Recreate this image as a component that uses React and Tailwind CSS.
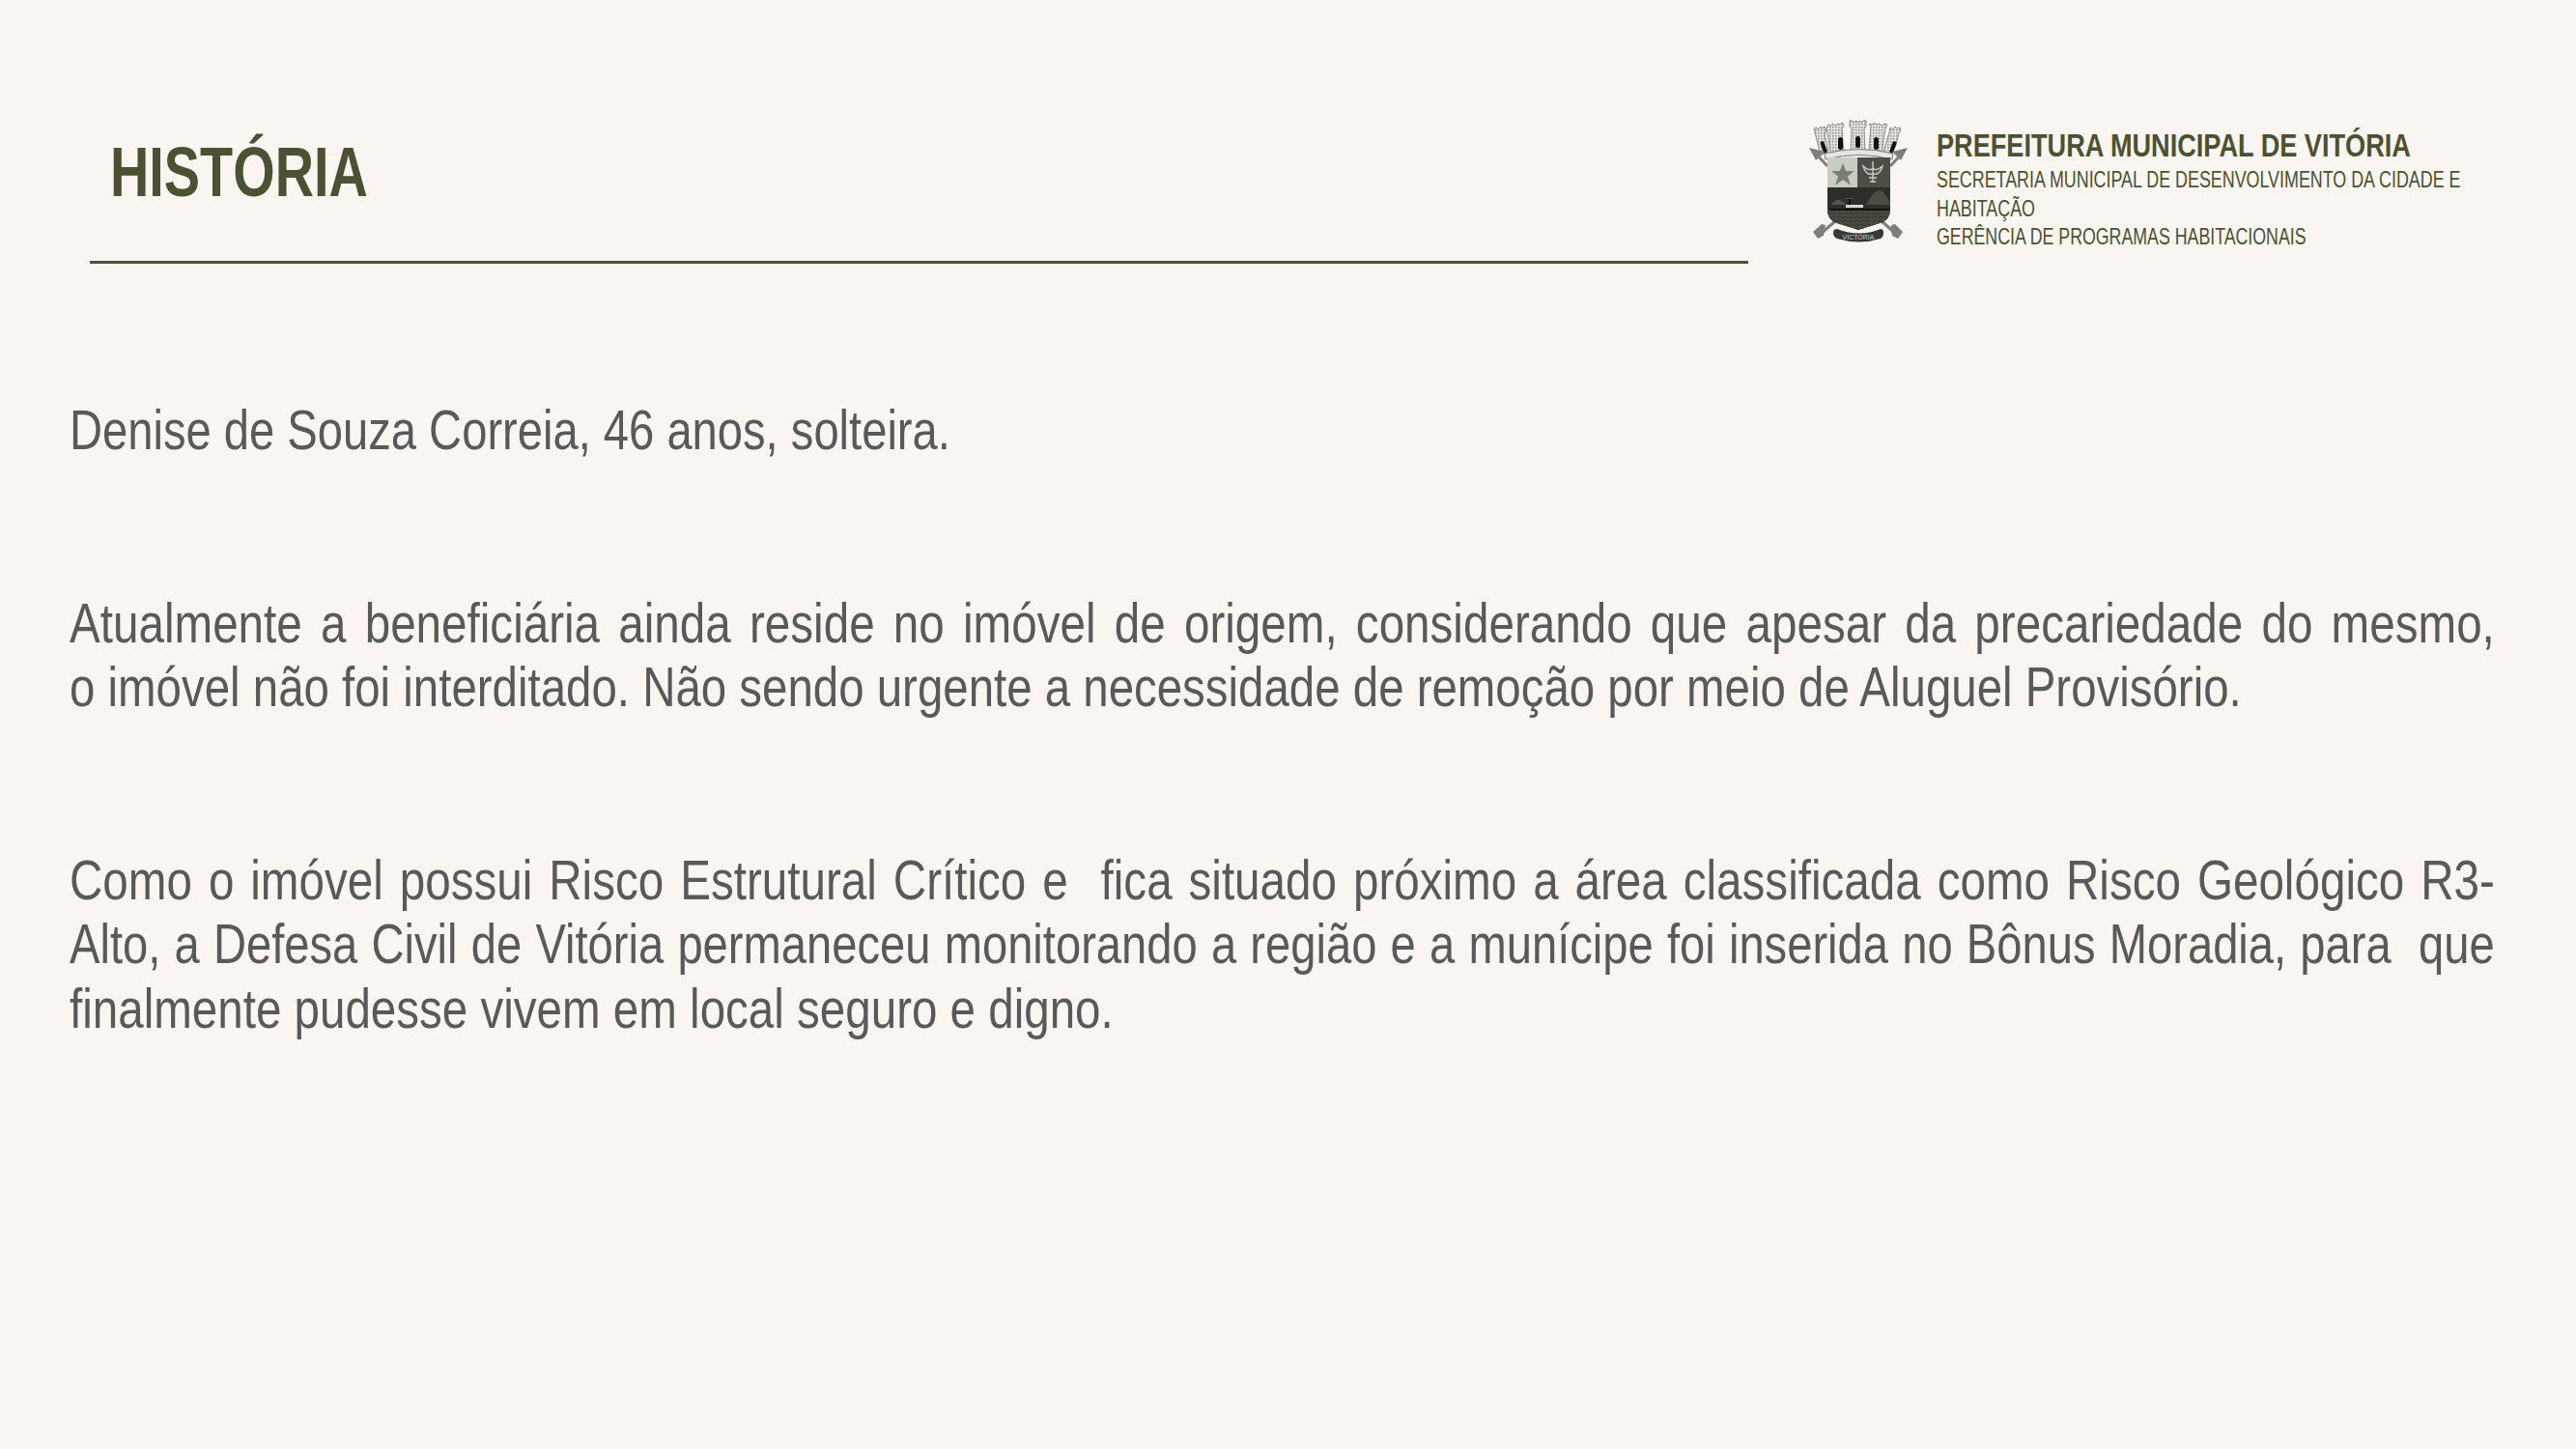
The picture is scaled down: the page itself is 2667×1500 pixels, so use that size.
const F = { fontFamily: '"Liberation Sans",Arial,sans-serif' };

function Crest() {
  return (
    <svg width="104" height="134" viewBox="0 0 104 134" className="shrink-0">
      <defs>
        <pattern id="st" width="3" height="3" patternUnits="userSpaceOnUse">
          <rect width="3" height="3" fill="#e4e2dc" />
          <rect width="1.500" height="1.500" fill="#8f8e88" />
        </pattern>
        <pattern id="sea" width="6" height="4" patternUnits="userSpaceOnUse">
          <rect width="6" height="4" fill="#4b4c42" />
          <path d="M0 3q1.500-3 3 0t3 0" stroke="#2a2b26" strokeWidth="1" fill="none" />
        </pattern>
      </defs>
      <g fill="url(#st)" stroke="#77776f" strokeWidth="0.800">
        <path d="M5 11l3-1 1 2 3-3 1 2 3-2 2 4-2 4 4 17-8 5-4-16-3-12z" />
        <path d="M20 7l3 1 2-2 2 2 3-2 2 1 3-2 1 4-2 2 2 26-13 4-4-26-2-2z" />
        <path d="M42 3h3l1 2 3-2 1 2 3-2 1 2 2-2h3v6l-2 2 1 26H43l1-26-2-2z" />
        <path d="M63 6l2 1 3-2 2 2 3-1 2 2 3-2 3 1-2 4-4 26-13-4 2-25-2-1z" />
        <path d="M84 10l3 2 2-3 2 2 3-1 1 3-2 3-3 12-5 11-8-4 6-20z" />
      </g>
      <g fill="#121210">
        <rect x="13" y="24" width="4" height="13" rx="2" transform="rotate(-20 15 30)" />
        <rect x="30" y="20" width="5" height="13" rx="2.500" />
        <rect x="48" y="19" width="5" height="12" rx="2.500" />
        <rect x="67" y="20" width="5" height="13" rx="2.500" />
        <rect x="85" y="24" width="4" height="13" rx="2" transform="rotate(20 87 30)" />
      </g>
      <path d="M16 37Q52 28 87 37l-1 6Q52 34 17 43z" fill="#e6e5df" stroke="#77776f" strokeWidth="1" />
      <g stroke="#7d8078" strokeWidth="3">
        <path d="M19 50L6 36" />
        <path d="M84 50l13-14" />
        <path d="M27 107L12 120" />
        <path d="M75 107l15 13" />
      </g>
      <g fill="#7d8078">
        <path d="M0 31l16 4-9 9z" />
        <path d="M102 31l-16 4 9 9z" />
        <path d="M17 111l-4-1-9 8 5 7 6-3 1-5z" />
        <path d="M85 111l4-1 8 8-5 7-6-3-1-5z" />
      </g>
      <path d="M19 41h31v31H19z" fill="#c8cdc1" />
      <path d="M50 41h34v31H50z" fill="#4d4f46" />
      <path d="M19 72h65v23q0 12-14 15l-19 6-19-6q-13-3-13-15z" fill="#2e2f2a" />
      <path d="M19 95h65q0 12-14 15l-19 6-19-6q-13-3-13-15z" fill="url(#sea)" />
      <path d="M35 47l3.200 8h8.800l-7 5.500 2.800 9-7.800-5.500-7.800 5.500 2.800-9-7-5.500h8.800z" fill="#7b7f72" />
      <path d="M66 45v22M56 50q7 6 10 2q3 4 10-2q-3 10-10 8q-7 2-10-8zM62 62h8M63 66h6" stroke="#c9cbc2" strokeWidth="1.400" fill="none" />
      <path d="M59 90q7-14 13-15t12 13v2z" fill="#4b4c42" />
      <path d="M23 90q3-5 7-5t9 5z" fill="#55564d" />
      <rect x="38" y="90" width="18" height="3" fill="#d8d8d0" />
      <rect x="41" y="83" width="2" height="7" fill="#111" />
      <rect x="37" y="83" width="9" height="1" fill="#555" />
      <path d="M21 95h62" stroke="#111" strokeWidth="2" />
      <path d="M29 115q23 9 45 0 3 0 3 4t-3 6q-22 7-45 0-4-2-4-6t4-4z" fill="#383933" />
      <text x="51" y="126" textAnchor="middle" fontSize="7" fill="#ccc" fontFamily="Liberation Sans">VICTORIA</text>
    </svg>
  );
}

export default function App() {
  return (
    <div className="w-[2667px] h-[1500px] bg-[#faf5f1] overflow-hidden" style={F}>
      <header className="flex items-start pl-[93px] pt-[122px]">
        <div className="w-[1717px] shrink-0 border-b-[3px] border-[#4b5132] h-[151px] pl-[21px] pt-[14px]">
          <h1 className="m-0 text-[73px] leading-[84px] font-bold text-[#4b5132] origin-left scale-x-[0.765]">HISTÓRIA</h1>
        </div>
        <div className="flex items-start ml-[63px] gap-[28px]">
          <Crest />
          <div className="w-[580px] pt-[8px] text-[#4b5132]">
            <div className="text-[34px] leading-[41px] font-bold whitespace-nowrap origin-left scale-x-[0.798]">PREFEITURA MUNICIPAL DE VITÓRIA</div>
            <div className="w-[780px] text-[24px] leading-[29.5px] origin-left scale-x-[0.745]">SECRETARIA MUNICIPAL DE DESENVOLVIMENTO DA CIDADE E HABITAÇÃO</div>
            <div className="w-[780px] text-[24px] leading-[29.5px] origin-left scale-x-[0.74]">GERÊNCIA DE PROGRAMAS HABITACIONAIS</div>
          </div>
        </div>
      </header>
      <main className="ml-[72px] mt-[139px] text-[57px] leading-[66.5px] text-[#595959]">
        <p className="m-0 w-[3036px] origin-left scale-x-[0.827]">Denise de Souza Correia, 46 anos, solteira.</p>
        <p className="m-0 mt-[133px]">
          <span className="block w-[3007px] origin-left scale-x-[0.835] [text-align-last:justify]">Atualmente a beneficiária ainda reside no imóvel de origem, considerando que apesar da precariedade do mesmo,</span>
          <span className="block w-[3007px] origin-left scale-x-[0.832]">o imóvel não foi interditado. Não sendo urgente a necessidade de remoção por meio de Aluguel Provisório.</span>
        </p>
        <p className="m-0 mt-[133px]">
          <span className="block w-[3007px] origin-left scale-x-[0.835] [text-align-last:justify]">Como o imóvel possui Risco Estrutural Crítico e &nbsp;fica situado próximo a área classificada como Risco Geológico R3-</span>
          <span className="block w-[3036px] origin-left scale-x-[0.827] [text-align-last:justify]">Alto, a Defesa Civil de Vitória permaneceu monitorando a região e a munícipe foi inserida no Bônus Moradia, para &nbsp;que</span>
          <span className="block w-[3007px] origin-left scale-x-[0.834]">finalmente pudesse vivem em local seguro e digno.</span>
        </p>
      </main>
    </div>
  );
}
